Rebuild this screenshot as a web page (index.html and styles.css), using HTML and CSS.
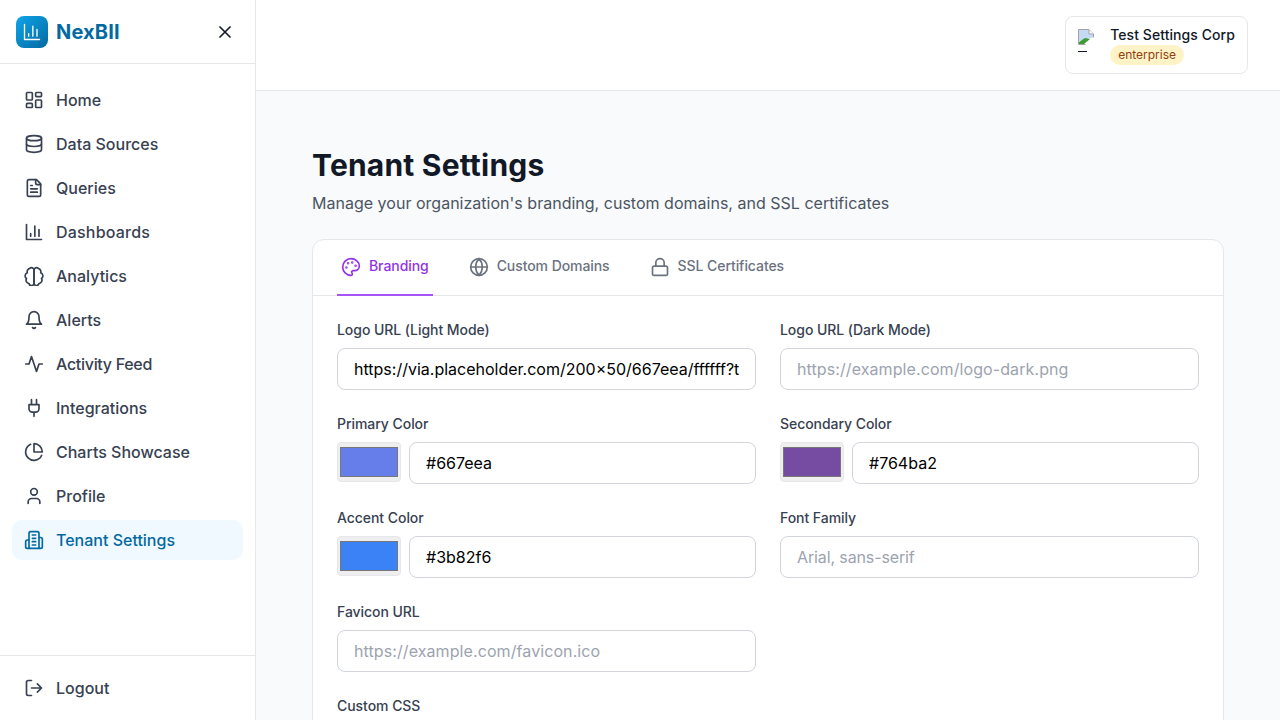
FILE: index.html
```html
<!DOCTYPE html>
<html lang="en">
<head>
<meta charset="utf-8">
<title>Tenant Settings</title>
<link rel="stylesheet" href="styles.css">
</head>
<body>
<div class="app">
  <aside class="sidebar">
    <div class="brand">
      <div class="brand-left">
        <span class="logo"><svg class="logo-icon" viewBox="0 0 24 24"><path d="M3 3v18h18M18 17V9M13 17V5M8 17v-3"/></svg></span>
        <span class="brand-name">NexBII</span>
      </div>
      <button class="close-btn" aria-label="Close"><svg class="icon close-icon" viewBox="0 0 24 24"><path d="M18 6 6 18M6 6l12 12"/></svg></button>
    </div>
    <nav class="nav">
      <a class="nav-item"><svg class="icon" viewBox="0 0 24 24"><rect x="3" y="3" width="7" height="9" rx="1"/><rect x="14" y="3" width="7" height="5" rx="1"/><rect x="14" y="12" width="7" height="9" rx="1"/><rect x="3" y="16" width="7" height="5" rx="1"/></svg>Home</a>
      <a class="nav-item"><svg class="icon" viewBox="0 0 24 24"><ellipse cx="12" cy="5" rx="9" ry="3"/><path d="M3 5v14a9 3 0 0 0 18 0V5"/><path d="M3 12a9 3 0 0 0 18 0"/></svg>Data Sources</a>
      <a class="nav-item"><svg class="icon" viewBox="0 0 24 24"><path d="M15 2H6a2 2 0 0 0-2 2v16a2 2 0 0 0 2 2h12a2 2 0 0 0 2-2V7Z"/><path d="M14 2v4a2 2 0 0 0 2 2h4M10 9H8M16 13H8M16 17H8"/></svg>Queries</a>
      <a class="nav-item loose"><svg class="icon" viewBox="0 0 24 24"><path d="M3 3v18h18M18 17V9M13 17V5M8 17v-3"/></svg>Dashboards</a>
      <a class="nav-item"><svg class="icon" viewBox="0 0 24 24"><path d="M12 5a3 3 0 0 0-5.100-2.100A4 4 0 0 0 4 8a4 4 0 0 0-1 7 4 4 0 0 0 3 6 3 3 0 0 0 6-1Z"/><path d="M12 5a3 3 0 0 1 5.100-2.100A4 4 0 0 1 20 8a4 4 0 0 1 1 7 4 4 0 0 1-3 6 3 3 0 0 1-6-1Z"/></svg>Analytics</a>
      <a class="nav-item"><svg class="icon" viewBox="0 0 24 24"><path d="M10.300 21a1.940 1.940 0 0 0 3.400 0"/><path d="M6 8a6 6 0 0 1 12 0c0 7 3 9 3 9H3s3-2 3-9"/></svg>Alerts</a>
      <a class="nav-item tight"><svg class="icon" viewBox="0 0 24 24"><path d="M22 12h-4l-3 9L9 3l-3 9H2"/></svg>Activity Feed</a>
      <a class="nav-item"><svg class="icon" viewBox="0 0 24 24"><path d="M12 22v-5M9 8V2M15 8V2M18 8v5a4 4 0 0 1-4 4h-4a4 4 0 0 1-4-4V8Z"/></svg>Integrations</a>
      <a class="nav-item"><svg class="icon" viewBox="0 0 24 24"><path d="M21.210 15.890A10 10 0 1 1 8 2.830"/><path d="M22 12A10 10 0 0 0 12 2v10z"/></svg>Charts Showcase</a>
      <a class="nav-item"><svg class="icon" viewBox="0 0 24 24"><path d="M19 21v-2a4 4 0 0 0-4-4H9a4 4 0 0 0-4 4v2"/><circle cx="12" cy="7" r="4"/></svg>Profile</a>
      <a class="nav-item active"><svg class="icon" viewBox="0 0 24 24"><path d="M6 22V4a2 2 0 0 1 2-2h8a2 2 0 0 1 2 2v18Z"/><path d="M6 12H4a2 2 0 0 0-2 2v6a2 2 0 0 0 2 2h2M18 9h2a2 2 0 0 1 2 2v9a2 2 0 0 1-2 2h-2M10 6h4M10 10h4M10 14h4M10 18h4"/></svg>Tenant Settings</a>
    </nav>
    <div class="sidebar-foot">
      <a class="nav-item"><svg class="icon" viewBox="0 0 24 24"><path d="M9 21H5a2 2 0 0 1-2-2V5a2 2 0 0 1 2-2h4M16 17l5-5-5-5M21 12H9"/></svg>Logout</a>
    </div>
  </aside>
  <div class="content">
    <header class="topbar">
      <div class="tenant-card">
        <div class="tenant-logo">
          <svg class="broken" viewBox="0 0 16 16"><path class="broken-page" d="M.5.500h10.500l4.500 4.500v10.500H.5Z"/><path class="broken-sky" d="M1 1h9.500l4.500 4.500v3L1 12Z"/><path class="broken-grass" d="M1 15v-2l6-4 5 1-6 5Z"/><path class="broken-fold" d="M11 .5v4.500h4.500"/><path class="broken-tear" d="M7 16 16 8v8Z"/></svg>
          <span class="tenant-alt"></span>
        </div>
        <div class="tenant-info">
          <div class="tenant-name">Test Settings Corp</div>
          <span class="tenant-plan">enterprise</span>
        </div>
      </div>
    </header>
    <main class="main">
      <h1 class="title">Tenant Settings</h1>
      <p class="subtitle">Manage your organization's branding, custom domains, and SSL certificates</p>
      <section class="card">
        <div class="tabs">
          <a class="tab active"><svg class="icon" viewBox="0 0 24 24"><circle class="dot" cx="13.500" cy="6.500" r=".5"/><circle class="dot" cx="17.500" cy="10.500" r=".5"/><circle class="dot" cx="8.500" cy="7.500" r=".5"/><circle class="dot" cx="6.500" cy="12.500" r=".5"/><path d="M12 2C6.500 2 2 6.500 2 12s4.500 10 10 10c.926 0 1.648-.746 1.648-1.688 0-.437-.18-.835-.437-1.125-.29-.289-.438-.652-.438-1.125a1.640 1.640 0 0 1 1.668-1.668h1.996c3.051 0 5.555-2.503 5.555-5.554C21.965 6.012 17.461 2 12 2z"/></svg>Branding</a>
          <a class="tab"><svg class="icon" viewBox="0 0 24 24"><circle cx="12" cy="12" r="10"/><path d="M12 2a14.500 14.500 0 0 0 0 20 14.500 14.500 0 0 0 0-20M2 12h20"/></svg>Custom Domains</a>
          <a class="tab"><svg class="icon" viewBox="0 0 24 24"><rect x="3" y="11" width="18" height="11" rx="2"/><path d="M7 11V7a5 5 0 0 1 10 0v4"/></svg>SSL Certificates</a>
        </div>
        <form class="form">
          <div class="field">
            <label class="label">Logo URL (Light Mode)</label>
            <input class="input" type="text" value="https://via.placeholder.com/200x50/667eea/ffffff?text=Test+Settings">
          </div>
          <div class="field">
            <label class="label">Logo URL (Dark Mode)</label>
            <input class="input ph-wide" type="text" placeholder="https://example.com/logo-dark.png">
          </div>
          <div class="field">
            <label class="label">Primary Color</label>
            <div class="color-row"><input class="swatch" type="color" value="#667eea"><input class="input" type="text" value="#667eea"></div>
          </div>
          <div class="field">
            <label class="label">Secondary Color</label>
            <div class="color-row"><input class="swatch" type="color" value="#764ba2"><input class="input" type="text" value="#764ba2"></div>
          </div>
          <div class="field">
            <label class="label">Accent Color</label>
            <div class="color-row"><input class="swatch" type="color" value="#3b82f6"><input class="input" type="text" value="#3b82f6"></div>
          </div>
          <div class="field">
            <label class="label">Font Family</label>
            <input class="input ph-narrow" type="text" placeholder="Arial, sans-serif">
          </div>
          <div class="field">
            <label class="label">Favicon URL</label>
            <input class="input ph-wide" type="text" placeholder="https://example.com/favicon.ico">
          </div>
          <div class="field wide">
            <label class="label">Custom CSS</label>
            <textarea class="input area" rows="4"></textarea>
          </div>
        </form>
      </section>
    </main>
  </div>
</div>
</body>
</html>
```
FILE: styles.css
```css
* { box-sizing: border-box; }
html, body { margin: 0; height: 100%; overflow: hidden; }
body { font-family: Inter, "Liberation Sans", sans-serif; color: #111827; background: #f9fafb; }
.app { display: flex; height: 720px; }
.icon { width: 20px; height: 20px; flex: none; fill: none; stroke: currentColor; stroke-width: 2; stroke-linecap: round; stroke-linejoin: round; }

.sidebar { width: 256px; flex: none; display: flex; flex-direction: column; background: #fff; border-right: 1px solid #e5e7eb; }
.brand { height: 64px; flex: none; display: flex; align-items: center; justify-content: space-between; padding: 0 12px 0 16px; border-bottom: 1px solid #e5e7eb; }
.brand-left { display: flex; align-items: center; gap: 8px; }
.logo { width: 32px; height: 32px; display: flex; align-items: center; justify-content: center; border-radius: 8px; background: linear-gradient(135deg, #0ea5e9, #0369a1); }
.logo-icon { width: 20px; height: 20px; fill: none; stroke: #fff; stroke-width: 1.6; stroke-linecap: round; stroke-linejoin: round; }
.brand-name { font-size: 20px; line-height: 28px; font-weight: 700; color: #0369a1; letter-spacing: .15px; }
.close-btn { width: 36px; height: 36px; display: flex; align-items: center; justify-content: center; padding: 0; border: 0; background: none; color: #111827; }
.nav { flex: 1; display: flex; flex-direction: column; gap: 4px; padding: 16px 12px; }
.nav-item { height: 40px; display: flex; align-items: center; gap: 12px; padding: 0 12px; border-radius: 10px; font-size: 16px; font-weight: 500; color: #374151; }
.nav-item.active { background: #f0f9ff; color: #0369a1; }
.nav-item.tight { letter-spacing: -.3px; }
.nav-item.loose { letter-spacing: .2px; }
.sidebar-foot { flex: none; height: 65px; padding: 12px; border-top: 1px solid #e5e7eb; }

.content { flex: 1; min-width: 0; display: flex; flex-direction: column; }
.topbar { height: 91px; flex: none; display: flex; align-items: center; justify-content: flex-end; padding: 0 32px; background: #fff; border-bottom: 1px solid #e5e7eb; }
.tenant-card { height: 58px; display: flex; align-items: center; gap: 12px; padding: 0 12px; background: #fff; border: 1px solid #e5e7eb; border-radius: 8px; }
.tenant-logo { width: 20px; height: 32px; overflow: hidden; display: flex; flex-direction: column; }
.broken { width: 16px; height: 16px; flex: none; }
.broken-page { fill: #fff; stroke: #a0a4a8; stroke-width: 1; }
.broken-sky { fill: #c5d9f5; }
.broken-grass { fill: #3f9c35; }
.broken-fold { fill: #fff; stroke: #a0a4a8; stroke-width: 1; }
.broken-tear { fill: #fff; }
.tenant-alt { width: 9px; height: 1px; margin-top: 6px; background: #111827; }
.tenant-info { display: flex; flex-direction: column; align-items: flex-start; }
.tenant-name { font-size: 14px; line-height: 20px; font-weight: 500; color: #111827; letter-spacing: .07px; }
.tenant-plan { height: 20px; padding: 0 8px; border-radius: 10px; background: #fef3c7; color: #92400e; font-size: 12px; line-height: 20px; }

.main { flex: 1; min-height: 0; overflow: hidden; padding: 56px 56px 0; }
.title { margin: 0; font-size: 30px; line-height: 36px; font-weight: 700; color: #111827; letter-spacing: .2px; }
.subtitle { margin: 8px 0 24px; font-size: 16px; line-height: 24px; color: #4b5563; letter-spacing: .013px; }
.card { background: #fff; border: 1px solid #e5e7eb; border-radius: 12px; }
.tabs { height: 56px; display: flex; gap: 32px; padding: 0 24px; border-bottom: 1px solid #e5e7eb; }
.tab { height: 56px; display: flex; align-items: center; gap: 8px; padding: 0 4px 4px; font-size: 14px; font-weight: 500; color: #6b7280; letter-spacing: -.07px; border-bottom: 2px solid transparent; }
.tab .icon { margin-top: 4px; }
.tab.active { color: #9333ea; border-bottom-color: #a855f7; }
.dot { fill: currentColor; }
.form { display: grid; grid-template-columns: 1fr 1fr; gap: 24px; padding: 24px; }
.field { display: flex; flex-direction: column; gap: 8px; min-width: 0; }
.wide { grid-column: 1 / -1; }
.label { font-size: 14px; line-height: 20px; font-weight: 500; color: #374151; letter-spacing: -.05px; }
.input { width: 100%; height: 42px; min-width: 0; padding: 0 16px; font: 400 16px Inter, "Liberation Sans", sans-serif; color: #000; background: #fff; border: 1px solid #d1d5db; border-radius: 8px; outline: none; }
.input::placeholder { color: #9ca3af; opacity: 1; }
.ph-wide { letter-spacing: .09px; }
.ph-narrow { letter-spacing: -.12px; }
.area { height: 120px; padding: 8px 16px; resize: none; }
.color-row { display: flex; gap: 8px; }
.swatch { width: 64px; height: 40px; margin: 0; flex: none; padding: 0; background: #efefef; border: 1px solid #e5e7eb; border-radius: 4px; }
.color-row .input { flex: 1; width: auto; }
```
